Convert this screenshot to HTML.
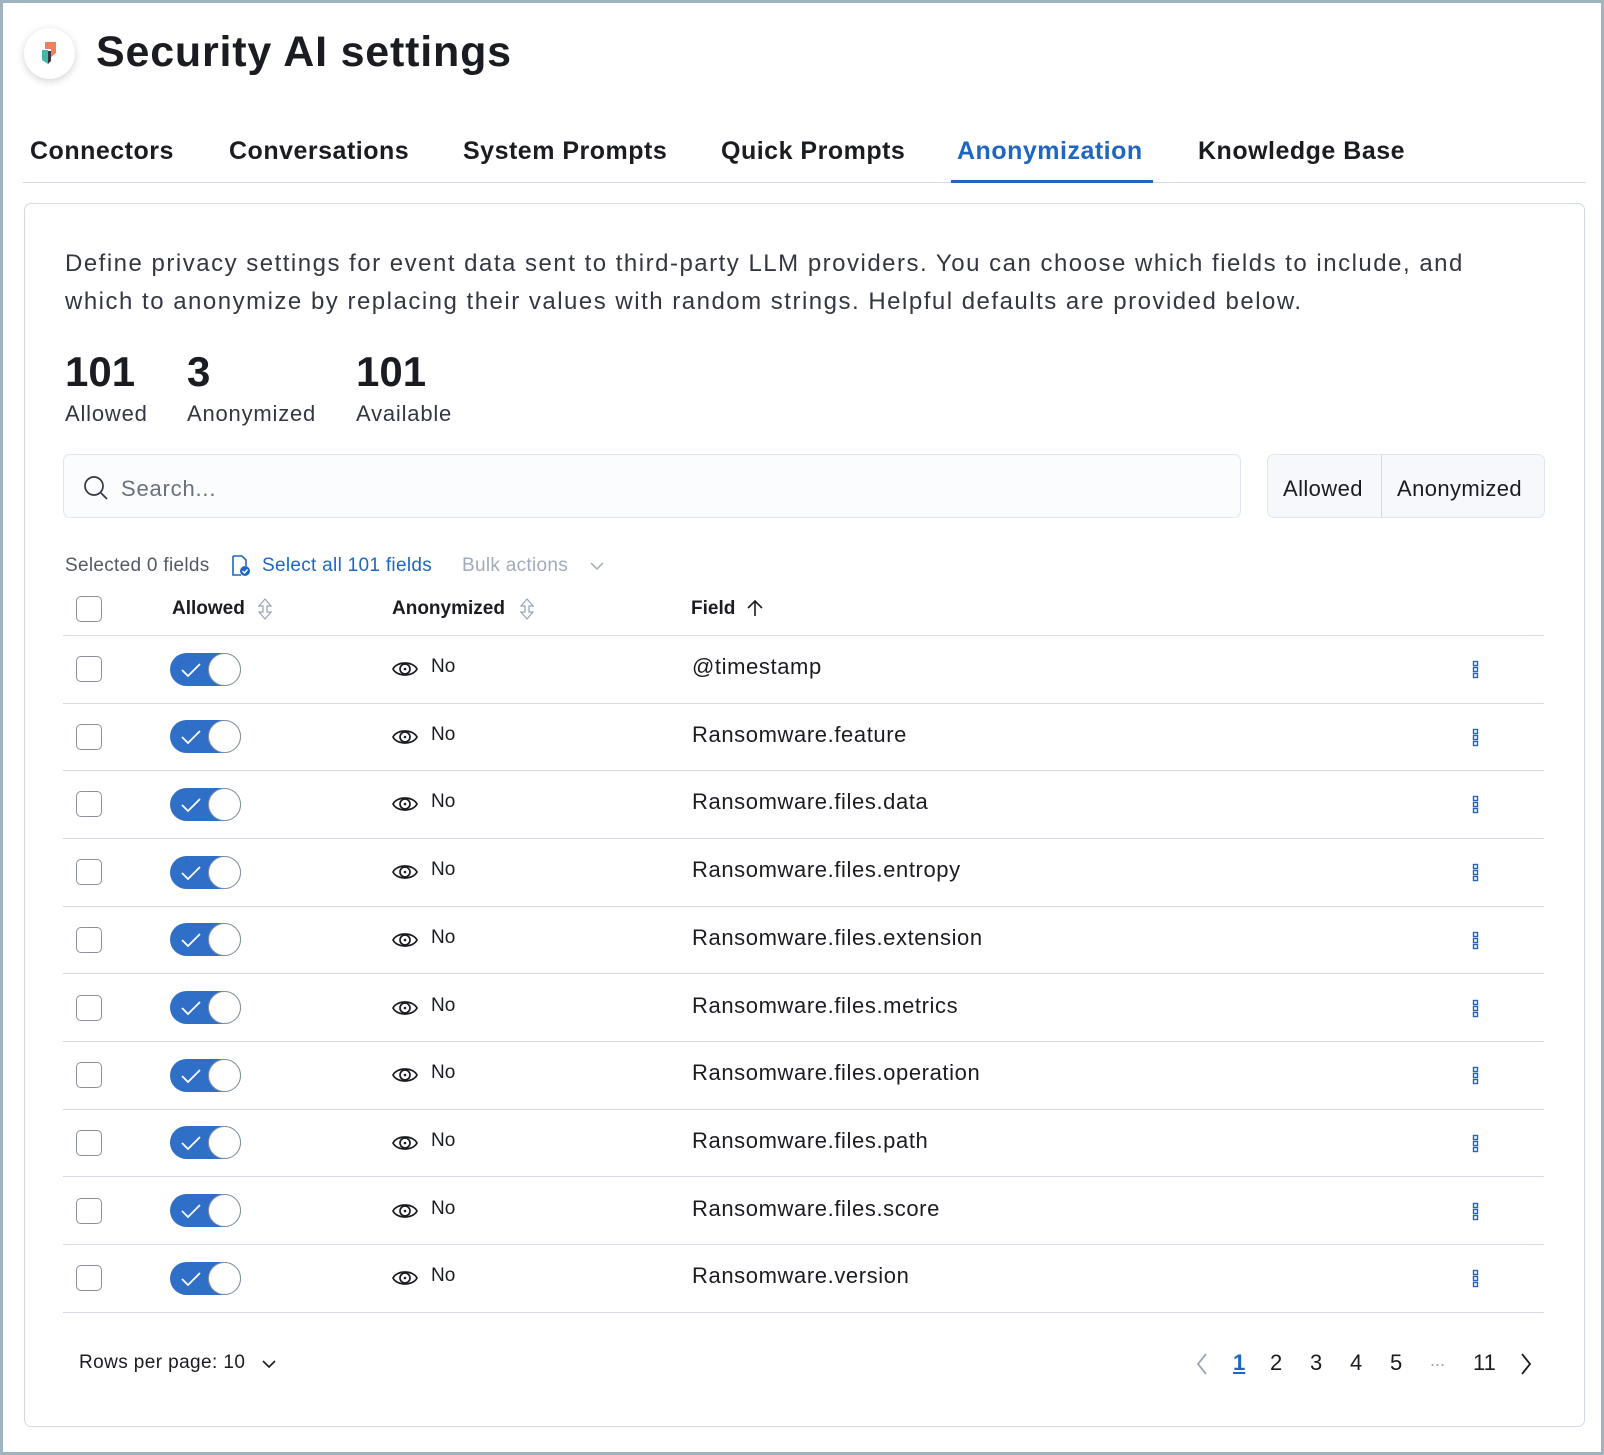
<!DOCTYPE html>
<html><head><meta charset="utf-8"><style>
*{box-sizing:border-box;margin:0;padding:0}
html,body{width:1604px;height:1455px;overflow:hidden;background:#fff}
body{font-family:"Liberation Sans",sans-serif;color:#1a1c21;position:relative;border:3px solid #9fb4bf}
.a{position:absolute;white-space:nowrap}
.tab{position:absolute;top:134px;font-size:25px;font-weight:bold;color:#1a1c21;letter-spacing:.5px}
.cb{position:absolute;left:73px;width:26px;height:26px;border:1.5px solid #8a919c;border-radius:5px;background:#fff}
.tg{position:absolute;left:167px;width:71px;height:33px;border-radius:17px;background:#2f6fc7}
.tg:after{content:"";position:absolute;right:0;top:0;width:33px;height:33px;border-radius:50%;background:#fff;border:1.5px solid #8a919c;box-sizing:border-box}
.tg svg{position:absolute;left:10px;top:9px}
.ln{position:absolute;left:60px;width:1481px;height:1px;background:#d3dae6}
.txt{font-size:22px;letter-spacing:.8px}
</style></head><body>
<div class="a" style="left:21px;top:25px;width:51px;height:51px;border-radius:50%;background:#fff;box-shadow:0 2px 8px rgba(0,0,0,.18)"></div>
<svg class="a" style="left:36px;top:37px" width="20" height="28" viewBox="0 0 20 28"><path d="M6 2h11v11l-5 4V9H6z" fill="#f07f5b"/><path d="M3 10h6v14l-6-4z" fill="#3fb9a9"/><path d="M9 11h3v10l-3 3z" fill="#343741"/></svg>
<div class="a" style="left:93px;top:25px;font-size:43px;font-weight:bold;letter-spacing:.8px">Security AI settings</div>
<div class="tab" style="left:27px">Connectors</div>
<div class="tab" style="left:226px">Conversations</div>
<div class="tab" style="left:460px">System Prompts</div>
<div class="tab" style="left:718px">Quick Prompts</div>
<div class="tab" style="left:954px;color:#1f66c1">Anonymization</div>
<div class="tab" style="left:1195px">Knowledge Base</div>
<div class="a" style="left:20px;top:179px;width:1563px;height:1px;background:#d3dae6"></div>
<div class="a" style="left:948px;top:177px;width:202px;height:3px;background:#1f66c1"></div>
<div class="a" style="left:21px;top:200px;width:1561px;height:1224px;border:1.5px solid #d3dae6;border-radius:7px"></div>
<div class="a" style="left:62px;top:242px;font-size:24px;line-height:38px;color:#343741;letter-spacing:1.5px">Define privacy settings for event data sent to third-party LLM providers. You can choose which fields to include, and<br>which to anonymize by replacing their values with random strings. Helpful defaults are provided below.</div>
<div class="a" style="left:62px;top:345px;font-size:42px;font-weight:bold">101</div>
<div class="a" style="left:184px;top:345px;font-size:42px;font-weight:bold">3</div>
<div class="a" style="left:353px;top:345px;font-size:42px;font-weight:bold">101</div>
<div class="a txt" style="left:62px;top:398px;color:#343741">Allowed</div>
<div class="a txt" style="left:184px;top:398px;color:#343741">Anonymized</div>
<div class="a txt" style="left:353px;top:398px;color:#343741">Available</div>
<div class="a" style="left:60px;top:451px;width:1178px;height:64px;background:#fbfcfd;border:1.5px solid #e0e5ee;border-radius:7px"></div>
<svg class="a" style="left:80px;top:472px" width="26" height="26" viewBox="0 0 26 26"><circle cx="11" cy="11" r="9" fill="none" stroke="#343741" stroke-width="1.7"/><path d="M18 18l6 6" stroke="#343741" stroke-width="1.7"/></svg>
<div class="a txt" style="left:118px;top:473px;color:#69707d">Search...</div>
<div class="a" style="left:1264px;top:451px;width:278px;height:64px;background:#f7f8fc;border:1.5px solid #e0e5ee;border-radius:7px"></div>
<div class="a" style="left:1378px;top:452px;width:1px;height:62px;background:#d3dae6"></div>
<div class="a txt" style="left:1280px;top:473px;letter-spacing:.4px">Allowed</div>
<div class="a txt" style="left:1394px;top:473px;letter-spacing:.4px">Anonymized</div>
<div class="a" style="left:62px;top:552px;font-size:19px;color:#535966;letter-spacing:.3px">Selected 0 fields</div>
<svg class="a" style="left:228px;top:552px" width="20" height="22" viewBox="0 0 20 22"><path d="M2 1h9l4 4v6M2 1v19h8" fill="none" stroke="#1f66c1" stroke-width="1.6"/><circle cx="14" cy="16" r="5" fill="#1f66c1"/><path d="M11.5 16l2 2 3-3.5" fill="none" stroke="#fff" stroke-width="1.4"/></svg>
<div class="a" style="left:259px;top:552px;font-size:19px;color:#1f66c1;letter-spacing:.3px">Select all 101 fields</div>
<div class="a" style="left:459px;top:552px;font-size:19px;color:#a2abba;letter-spacing:.3px">Bulk actions</div>
<svg class="a" style="left:586px;top:557px" width="16" height="12"><path d="M2 3l6 6 6-6" fill="none" stroke="#a2abba" stroke-width="1.5"/></svg>
<div class="cb" style="top:593px"></div>
<div class="a" style="left:169px;top:595px;font-size:19px;font-weight:bold">Allowed</div>
<svg class="a" style="left:254px;top:595px" width="16" height="22"><path d="M8 1l6 7H10v6h4l-6 7-6-7h4V8H2z" fill="none" stroke="#98a2b3" stroke-width="1.2"/></svg>
<div class="a" style="left:389px;top:595px;font-size:19px;font-weight:bold">Anonymized</div>
<svg class="a" style="left:516px;top:595px" width="16" height="22"><path d="M8 1l6 7H10v6h4l-6 7-6-7h4V8H2z" fill="none" stroke="#98a2b3" stroke-width="1.2"/></svg>
<div class="a" style="left:688px;top:595px;font-size:19px;font-weight:bold">Field</div>
<svg class="a" style="left:743px;top:596px" width="18" height="18"><path d="M9 17V2M2 9l7-7 7 7" fill="none" stroke="#1a1c21" stroke-width="1.6"/></svg>
<div class="ln" style="top:632px"></div>
<div id="rows"></div>
<script>
var f=["@timestamp","Ransomware.feature","Ransomware.files.data","Ransomware.files.entropy","Ransomware.files.extension","Ransomware.files.metrics","Ransomware.files.operation","Ransomware.files.path","Ransomware.files.score","Ransomware.version"],h="";
for(var i=0;i<10;i++){var c=666+i*67.7;
h+='<div class="cb" style="top:'+(c-13)+'px"></div>';
h+='<div class="tg" style="top:'+(c-16.5)+'px"><svg width="22" height="16"><path d="M2 8l6 6L20 2" fill="none" stroke="#fff" stroke-width="1.8"/></svg></div>';
h+='<svg class="a" style="left:388px;top:'+(c-12)+'px" width="28" height="24"><path d="M2 12C6 4 22 4 26 12 22 20 6 20 2 12z" fill="none" stroke="#1a1c21" stroke-width="1.7"/><circle cx="14" cy="12" r="5" fill="none" stroke="#1a1c21" stroke-width="1.7"/><circle cx="14" cy="12" r="1.3" fill="#1a1c21"/></svg>';
h+='<div class="a" style="left:428px;top:'+(c-13)+'px;font-size:19px">No</div>';
h+='<div class="a" style="left:689px;top:'+(c-15)+'px;font-size:22px;color:#1a1c21;letter-spacing:.6px">'+f[i]+'</div>';
h+='<svg class="a" style="left:1469px;top:'+(c-9)+'px" width="8" height="20"><rect x="1.5" y="1.5" width="4" height="4" fill="none" stroke="#1f66c1" stroke-width="1.4"/><rect x="1.5" y="7.5" width="4" height="4" fill="none" stroke="#1f66c1" stroke-width="1.4"/><rect x="1.5" y="13.5" width="4" height="4" fill="none" stroke="#1f66c1" stroke-width="1.4"/></svg>';
h+='<div class="ln" style="top:'+Math.round(c+33.5)+'px"></div>';}
document.getElementById('rows').innerHTML=h;
</script>
<div class="a" style="left:76px;top:1349px;font-size:19px;letter-spacing:.4px">Rows per page: 10</div>
<svg class="a" style="left:258px;top:1355px" width="16" height="12"><path d="M2 3l6 6 6-6" fill="none" stroke="#1a1c21" stroke-width="1.6"/></svg>
<svg class="a" style="left:1192px;top:1349px" width="14" height="24"><path d="M11 2L3 12l8 10" fill="none" stroke="#98a2b3" stroke-width="1.8"/></svg>
<div class="a" style="left:1230px;top:1347px;font-size:22px;color:#1f66c1;text-decoration:underline;font-weight:bold">1</div>
<div class="a" style="left:1267px;top:1347px;font-size:22px">2</div>
<div class="a" style="left:1307px;top:1347px;font-size:22px">3</div>
<div class="a" style="left:1347px;top:1347px;font-size:22px">4</div>
<div class="a" style="left:1387px;top:1347px;font-size:22px">5</div>
<div class="a" style="left:1427px;top:1347px;font-size:18px;color:#98a2b3">...</div>
<div class="a" style="left:1470px;top:1347px;font-size:22px">11</div>
<svg class="a" style="left:1516px;top:1349px" width="14" height="24"><path d="M3 2l8 10-8 10" fill="none" stroke="#1a1c21" stroke-width="1.8"/></svg>
</body></html>
